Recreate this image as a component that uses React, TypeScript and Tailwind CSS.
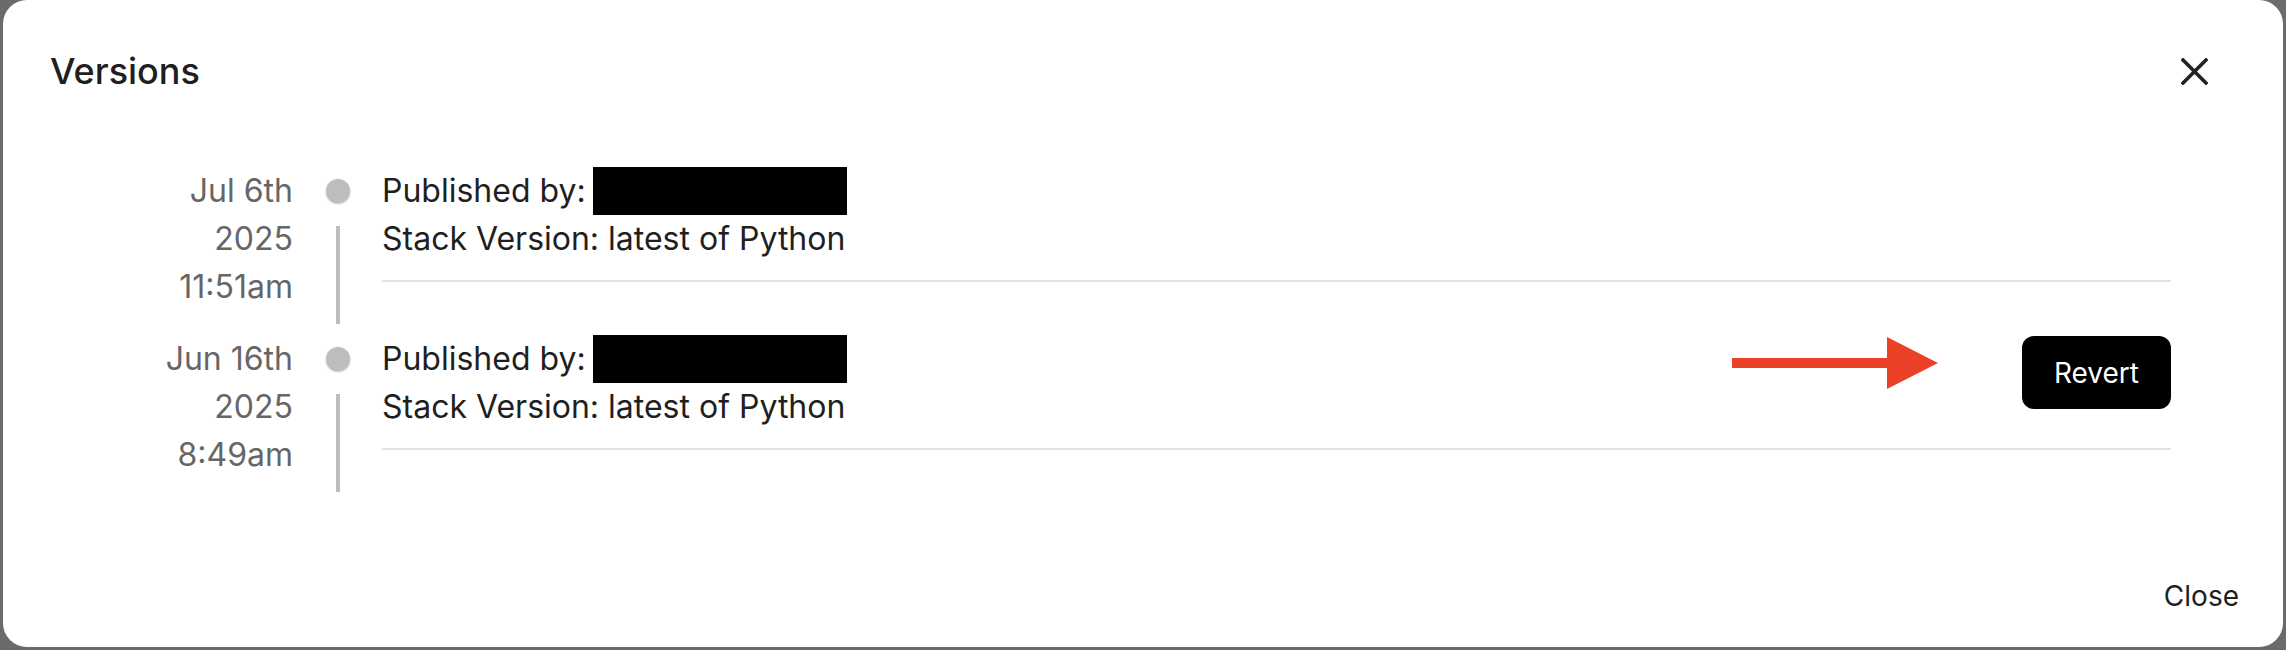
import React from "react";

type Version = {
  date: string;
  year: string;
  time: string;
  stack: string;
  canRevert?: boolean;
};

const versions: Version[] = [
  { date: "Jul 6th", year: "2025", time: "11:51am", stack: "latest of Python" },
  { date: "Jun 16th", year: "2025", time: "8:49am", stack: "latest of Python", canRevert: true },
];

function CloseIcon() {
  return (
    <svg width="27" height="27" viewBox="0 0 27 27" fill="none">
      <path d="M2 2 L25 25 M25 2 L2 25" stroke="#222" strokeWidth="3.6" strokeLinecap="square" />
    </svg>
  );
}

function RedArrow() {
  return (
    <svg width="206" height="52" viewBox="0 0 206 52" className="absolute left-[1350px] top-[2px]">
      <rect x="0" y="21" width="160" height="10" fill="#eb4127" />
      <polygon points="155,0 206,26 155,52" fill="#eb4127" />
    </svg>
  );
}

function VersionRow({ v }: { v: Version }) {
  return (
    <div className="flex mb-[11px]">
      <div className="w-[160px] text-right text-[32px] leading-[48px] text-[#666]">
        <div>{v.date}</div>
        <div>{v.year}</div>
        <div>{v.time}</div>
      </div>
      <div className="ml-[33px] w-[24px] flex flex-col items-center">
        <div className="mt-[12px] w-[24px] h-[24px] rounded-full bg-[#bdbdbd] shadow-[0_1px_2px_rgba(0,0,0,0.25)]" />
        <div className="mt-[23px] w-[4px] h-[98px] bg-[#bdbdbd]" />
      </div>
      <div className="ml-[32px] flex-1 relative">
        <div className="flex items-start border-b-2 border-[#e2e2e2] pb-[17px]">
          <div className="flex-1 text-[32px] leading-[48px] text-[#1f1f1f]">
            <div className="flex items-center">
              <span>Published by:</span>
              <span className="ml-[7px] inline-block w-[254px] h-[48px] bg-black" />
            </div>
            <div>Stack Version: {v.stack}</div>
          </div>
          {v.canRevert && (
            <button className="mt-[1px] w-[149px] h-[73px] rounded-[12px] bg-black text-white text-[28px]">
              Revert
            </button>
          )}
        </div>
        {v.canRevert && <RedArrow />}
      </div>
    </div>
  );
}

export default function App() {
  return (
    <div className="w-[2286px] h-[650px] bg-[#6b6b6b] overflow-hidden" style={{ fontFamily: "Inter, 'Noto Sans', sans-serif" }}>
      <div className="ml-[3px] w-[2280px] h-[647px] bg-white rounded-[24px] flex flex-col">
        <div className="pt-[49px] pl-[47px] pr-[75px] flex items-center justify-between">
          <h1 className="text-[36px] leading-[44px] font-medium text-[#1f1f1f]">Versions</h1>
          <button className="w-[27px] h-[27px]">
            <CloseIcon />
          </button>
        </div>
        <div className="mt-[74px] pl-[130px] pr-[112px]">
          {versions.map((v) => (
            <VersionRow key={v.date} v={v} />
          ))}
        </div>
        <div className="mt-auto pb-[33px] pr-[44px] flex justify-end">
          <button className="text-[28px] leading-[36px] text-[#1f1f1f]">Close</button>
        </div>
      </div>
    </div>
  );
}
